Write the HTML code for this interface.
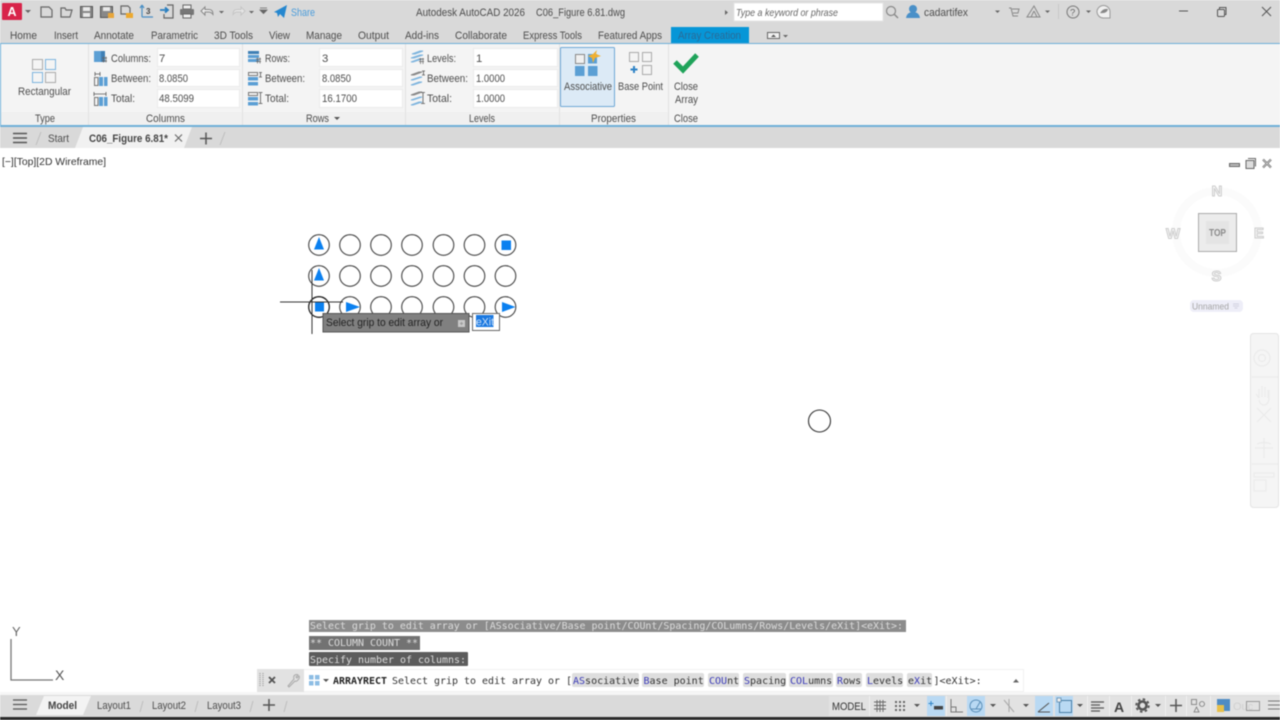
<!DOCTYPE html>
<html><head><meta charset="utf-8"><title>AutoCAD Array Creation</title>
<style>
html,body{margin:0;padding:0;width:1280px;height:720px;overflow:hidden;background:#fff}
svg{display:block;filter:blur(.4px)}
text{font-family:"Liberation Sans",sans-serif;font-size:11.3px;fill:#4d4d4d}
.m{font-family:"DejaVu Sans Mono","Liberation Mono",monospace;font-size:10px;fill:#333}
.u{fill:#3a3ab8}
.g{fill:#dcdcdc}
.i{fill:none;stroke:#666;stroke-width:1.2}
.b{fill:#5b9fd4}
.c{fill:none;stroke:#444;stroke-width:1.1}
.gr{fill:#0a80f0}
.v{fill:#f7f7f7;stroke:#cdcdcd;stroke-width:1;font-weight:bold;font-size:15px}
</style></head><body>
<svg width="1280" height="720" viewBox="0 0 1280 720" xmlns="http://www.w3.org/2000/svg">
<rect width="1280" height="720" fill="#fff"/>
<!-- top band -->
<rect width="1280" height="43" fill="#d9d9d9"/>
<!-- logo -->
<rect x="2" y="3" width="20" height="17" rx="1" fill="#d8244a"/>
<text x="7.500" y="16" style="font-weight:bold;font-size:12.500px;fill:#fff">A</text>
<path d="M25 10h6l-3 3z" fill="#666"/>
<!-- QAT icons -->
<path class="i" d="M41 7h8l3 3v7H41z"/>
<path class="i" d="M61 8h4l1 2h6l-2 7H61z"/>
<path d="M80.500 6.500h12v11h-12z" fill="#888" stroke="#555"/><rect x="83" y="7" width="7" height="4" fill="#e8e8e8"/><rect x="83" y="13" width="7" height="4" fill="#e8e8e8"/>
<path d="M100.500 6.500h12v11h-12z" fill="#888" stroke="#555"/><rect x="103" y="7" width="7" height="4" fill="#e8e8e8"/><rect x="108" y="13" width="6" height="5" fill="#e8a63a"/>
<path class="i" d="M121 6h7l2 2v6h-9z"/><rect x="126" y="13" width="7" height="5" fill="#eda92e"/>
<path d="M142 5v12M142 5l-2 3M142 5l2 3M142 17h11" fill="none" stroke="#4a8fc4" stroke-width="1.200"/><text x="146" y="14" style="font-size:8px;font-weight:bold;fill:#444">3</text>
<path class="i" d="M167 5h6v13h-9v-4"/><path d="M160 10h7M165 7.500l3 2.500-3 2.500" fill="none" stroke="#2a7fc0" stroke-width="1.800"/>
<path d="M183 5h8v4h-8z" fill="#eee" stroke="#666"/><rect x="180" y="9" width="14" height="6" rx="1" fill="#777"/><path d="M183 14h8v4h-8z" fill="#eee" stroke="#666"/>
<path d="M201 11l4-4v2.500h4q4 0 4 5-2-2.500-4-2.500h-4V15z" fill="#eee" stroke="#888"/>
<path d="M219 11h5l-2.500 2.500z" fill="#666"/>
<path d="M245 11l-4-4v2.500h-4q-4 0-4 5 2-2.500 4-2.500h4V15z" fill="#e6e6e6" stroke="#c5c5c5"/>
<path d="M249 11h5l-2.500 2.500z" fill="#666"/>
<path d="M260 8h7M260 10h7l-3.500 3.500z" fill="#666" stroke="#666" stroke-width=".8"/>
<path d="M274 12l13-7-3 13-4-4-2 3-1-4z" fill="#2587cf"/>
<text x="291" y="16" textLength="24" lengthAdjust="spacingAndGlyphs" style="fill:#4b9ddb">Share</text>
<!-- title -->
<text x="416" y="16" textLength="109" lengthAdjust="spacingAndGlyphs">Autodesk AutoCAD 2026</text>
<text x="536" y="16" textLength="89" lengthAdjust="spacingAndGlyphs">C06_Figure 6.81.dwg</text>
<path d="M725 10l3 2.500-3 2.500z" fill="#666"/>
<rect x="734" y="3" width="149" height="18" fill="#fff" stroke="#e5e5e5"/>
<text x="736" y="16" textLength="102" lengthAdjust="spacingAndGlyphs" style="font-style:italic;font-size:10.500px;fill:#666">Type a keyword or phrase</text>
<circle cx="891" cy="11" r="4.500" fill="none" stroke="#888" stroke-width="1.200"/><path d="M894.500 14.500l3.500 3.500" stroke="#888" stroke-width="1.400"/>
<circle cx="913" cy="9" r="4" fill="#4a90c8"/><path d="M906 18q1-6 7-6t7 6z" fill="#4a90c8"/>
<text x="924" y="16" textLength="44" lengthAdjust="spacingAndGlyphs">cadartifex</text>
<path d="M995 10.500h5l-2.500 2.500z" fill="#666"/>
<path d="M1009 8h2l2 8h5M1012 9h7l-1 4h-5" fill="none" stroke="#888" stroke-width="1"/>
<path d="M1034 6l6 11h-13z M1034 11l-3 6M1034 11l3 6" fill="none" stroke="#888" stroke-width="1"/>
<path d="M1045 10.500h5l-2.500 2.500z" fill="#666"/>
<rect x="1058" y="4" width="1" height="15" fill="#c8c8c8"/>
<circle cx="1073" cy="12" r="6" fill="none" stroke="#777" stroke-width="1"/><text x="1070" y="15.500" style="font-size:9.500px;fill:#666">?</text>
<path d="M1086 10.500h5l-2.500 2.500z" fill="#666"/>
<path d="M1097 12a6.500 6.500 0 1 1 13 0v6h-7a6.500 6.500 0 0 1-6-6z" fill="#f0f0f0" stroke="#999"/><path d="M1100 13q3-5 8-4-1 5-8 4z" fill="#888"/>
<path d="M1179 11h9" stroke="#555" stroke-width="1"/>
<rect x="1217.500" y="9.500" width="7" height="7" rx="1" fill="none" stroke="#555"/><path d="M1219.500 9v-1.500h6.500v7h-1.500" fill="none" stroke="#555"/>
<path d="M1262 7l9 9M1271 7l-9 9" stroke="#555" stroke-width="1"/>
<!-- tabs -->
<text x="10" y="39" textLength="27" lengthAdjust="spacingAndGlyphs">Home</text>
<text x="54" y="39" textLength="24" lengthAdjust="spacingAndGlyphs">Insert</text>
<text x="94" y="39" textLength="40" lengthAdjust="spacingAndGlyphs">Annotate</text>
<text x="151" y="39" textLength="47" lengthAdjust="spacingAndGlyphs">Parametric</text>
<text x="214" y="39" textLength="39" lengthAdjust="spacingAndGlyphs">3D Tools</text>
<text x="269" y="39" textLength="21" lengthAdjust="spacingAndGlyphs">View</text>
<text x="306" y="39" textLength="36" lengthAdjust="spacingAndGlyphs">Manage</text>
<text x="358" y="39" textLength="31" lengthAdjust="spacingAndGlyphs">Output</text>
<text x="405" y="39" textLength="34" lengthAdjust="spacingAndGlyphs">Add-ins</text>
<text x="455" y="39" textLength="52" lengthAdjust="spacingAndGlyphs">Collaborate</text>
<text x="523" y="39" textLength="59" lengthAdjust="spacingAndGlyphs">Express Tools</text>
<text x="598" y="39" textLength="64" lengthAdjust="spacingAndGlyphs">Featured Apps</text>
<rect x="671" y="27" width="78" height="17" fill="#0696d7"/>
<text x="678" y="39" textLength="63" lengthAdjust="spacingAndGlyphs" style="fill:#2b6a96">Array Creation</text>
<rect x="767.500" y="32.500" width="12" height="6" fill="#f0f0f0" stroke="#666"/><path d="M771 37l2.500-2.500 2.500 2.500z" fill="#555"/>
<path d="M783 35h5l-2.500 2.500z" fill="#666"/>
<!-- ribbon -->
<rect x="0" y="43" width="1280" height="84" fill="#6fb0d8"/>
<rect x="1" y="44" width="1279" height="81" fill="#f4f4f4"/>
<rect x="1" y="112" width="667" height="13" fill="#f0f0f0"/>
<g fill="#e2e2e2"><rect x="88" y="44" width="1" height="81"/><rect x="242" y="44" width="1" height="81"/><rect x="405" y="44" width="1" height="81"/><rect x="559" y="44" width="1" height="81"/><rect x="668" y="44" width="1" height="81"/></g>
<!-- rectangular icon -->
<g fill="none" stroke-width="1"><rect x="32.500" y="59.500" width="10" height="10" stroke="#aaa"/><rect x="45.500" y="59.500" width="10" height="10" stroke="#7db4de"/><rect x="32.500" y="72.500" width="10" height="10" stroke="#7db4de"/><rect x="45.500" y="72.500" width="10" height="10" stroke="#aaa"/></g>
<text x="18" y="95" textLength="53" lengthAdjust="spacingAndGlyphs">Rectangular</text>
<text x="35" y="122" textLength="20" lengthAdjust="spacingAndGlyphs">Type</text>
<!-- inputs -->
<g fill="#fff" stroke="#ebebeb">
<rect x="157.500" y="48.500" width="82" height="18"/><rect x="157.500" y="69.500" width="82" height="17"/><rect x="157.500" y="89.500" width="82" height="18"/>
<rect x="319.500" y="48.500" width="83" height="18"/><rect x="319.500" y="69.500" width="83" height="17"/><rect x="319.500" y="89.500" width="83" height="18"/>
<rect x="473.500" y="48.500" width="84" height="18"/><rect x="473.500" y="69.500" width="84" height="17"/><rect x="473.500" y="89.500" width="84" height="18"/>
</g>
<!-- column icons -->
<rect x="94" y="51" width="11" height="11" class="b"/><rect x="101" y="51" width="4" height="11" fill="#3f7fb5"/>
<path d="M102 58h5M102 61h5M103.500 56.500v6M106 56.500v6" stroke="#666" stroke-width=".7"/>
<path d="M95 74h5M95 72v4M100 72v4" stroke="#555" stroke-width=".8"/><rect x="94.500" y="77.500" width="3.500" height="8" fill="none" stroke="#777"/><rect x="99" y="77" width="4" height="9" class="b"/><rect x="104" y="77" width="3.500" height="9" class="b"/>
<path d="M94 94h12M94 92v4M106 92v4" stroke="#555" stroke-width=".8"/><rect x="94.500" y="97.500" width="3.500" height="8" fill="none" stroke="#777"/><rect x="99" y="97" width="4" height="9" class="b"/><rect x="104" y="97" width="3.500" height="9" class="b"/>
<text x="111" y="62" textLength="40" lengthAdjust="spacingAndGlyphs">Columns:</text>
<text x="111" y="82" textLength="40" lengthAdjust="spacingAndGlyphs">Between:</text>
<text x="111" y="102" textLength="24" lengthAdjust="spacingAndGlyphs">Total:</text>
<text x="159" y="62">7</text>
<text x="159" y="82" textLength="29" lengthAdjust="spacingAndGlyphs">8.0850</text>
<text x="159" y="102" textLength="35" lengthAdjust="spacingAndGlyphs">48.5099</text>
<text x="146" y="122" textLength="39" lengthAdjust="spacingAndGlyphs">Columns</text>
<!-- row icons -->
<rect x="248" y="51" width="11" height="3" fill="#3f7fb5"/><rect x="248" y="55" width="11" height="3" class="b"/><rect x="248" y="59" width="11" height="3" class="b"/>
<path d="M256 59h5M256 61.500h5M257.500 57.500v6M260 57.500v6" stroke="#666" stroke-width=".7"/>
<rect x="248.500" y="72.500" width="9" height="3" fill="none" stroke="#777"/><rect x="248" y="77" width="10" height="3.500" class="b"/><rect x="248" y="82" width="10" height="3.500" class="b"/><path d="M259 72.500h3M259 77h3M260.500 72.500v4.500" stroke="#555" stroke-width=".8"/>
<rect x="248.500" y="92.500" width="9" height="3" fill="none" stroke="#777"/><rect x="248" y="97" width="10" height="3.500" class="b"/><rect x="248" y="102" width="10" height="3.500" class="b"/><path d="M258.500 92.500h4M258.500 103.500h4M260.500 92.500v11" stroke="#555" stroke-width=".8"/>
<text x="265" y="62" textLength="25" lengthAdjust="spacingAndGlyphs">Rows:</text>
<text x="265" y="82" textLength="40" lengthAdjust="spacingAndGlyphs">Between:</text>
<text x="265" y="102" textLength="24" lengthAdjust="spacingAndGlyphs">Total:</text>
<text x="322" y="62">3</text>
<text x="322" y="82" textLength="29" lengthAdjust="spacingAndGlyphs">8.0850</text>
<text x="322" y="102" textLength="35" lengthAdjust="spacingAndGlyphs">16.1700</text>
<text x="306" y="122" textLength="23" lengthAdjust="spacingAndGlyphs">Rows</text>
<path d="M334 117h6l-3 3z" fill="#555"/>
<!-- level icons -->
<path d="M412 54l8-3h3l-8 3zM411 58l9-3h3l-9 3zM411 62l8-3h3l-9 3z" fill="#7db4de" stroke="#7db4de"/>
<path d="M419 59h5M419 61.500h5M420.500 58v6M423 58v6" stroke="#666" stroke-width=".7"/>
<path d="M411 75l8-3h3l-8 3z" fill="none" stroke="#888"/><path d="M411 80l9-3h2l-9 3zM411 85l8-3h3l-9 3z" fill="#7db4de" stroke="#7db4de"/><path d="M422 71h3M422 75h3M423.500 71v4" stroke="#555" stroke-width=".8"/>
<path d="M411 95l8-3h3l-8 3z" fill="none" stroke="#888"/><path d="M411 100l9-3h2l-9 3zM411 105l8-3h3l-9 3z" fill="#7db4de" stroke="#7db4de"/><path d="M421 92.500h4M421 103.500h4M423 92.500v11" stroke="#555" stroke-width=".8"/>
<text x="427" y="62" textLength="29" lengthAdjust="spacingAndGlyphs">Levels:</text>
<text x="427" y="82" textLength="41" lengthAdjust="spacingAndGlyphs">Between:</text>
<text x="427" y="102" textLength="25" lengthAdjust="spacingAndGlyphs">Total:</text>
<text x="476" y="62">1</text>
<text x="476" y="82" textLength="29" lengthAdjust="spacingAndGlyphs">1.0000</text>
<text x="476" y="102" textLength="29" lengthAdjust="spacingAndGlyphs">1.0000</text>
<text x="469" y="122" textLength="26" lengthAdjust="spacingAndGlyphs">Levels</text>
<!-- associative -->
<rect x="560.500" y="47.500" width="54" height="59" rx="1" fill="#dceaf6" stroke="#6fa8d6"/>
<rect x="575.500" y="54.500" width="9" height="9" fill="#f0f0f0" stroke="#888"/>
<rect x="588" y="54" width="9" height="9.500" class="b"/>
<rect x="575" y="66" width="9.500" height="10" class="b"/><rect x="588" y="66" width="9.500" height="10" class="b"/>
<path d="M597 50l-1 4 5 2-6 2-2 5-1-5-4-2 5-2z" fill="#f0b030"/>
<text x="564" y="90" textLength="48" lengthAdjust="spacingAndGlyphs">Associative</text>
<g fill="none" stroke="#aaa"><rect x="629.500" y="52.500" width="9" height="9"/><rect x="642.500" y="52.500" width="9" height="9"/><rect x="642.500" y="65.500" width="9" height="9"/></g>
<path d="M630.500 69.500h7M634 66v7" stroke="#2f83c6" stroke-width="2"/>
<text x="618" y="90" textLength="45" lengthAdjust="spacingAndGlyphs">Base Point</text>
<text x="591" y="122" textLength="45" lengthAdjust="spacingAndGlyphs">Properties</text>
<path d="M675 62l8 8 14-15" fill="none" stroke="#1fa35a" stroke-width="5"/>
<text x="674" y="90" textLength="24" lengthAdjust="spacingAndGlyphs">Close</text>
<text x="675" y="103" textLength="23" lengthAdjust="spacingAndGlyphs">Array</text>
<text x="674" y="122" textLength="24" lengthAdjust="spacingAndGlyphs">Close</text>
<!-- file tabs -->
<rect x="0" y="127" width="1280" height="21" fill="#d9d9d9"/>
<path d="M13 133.500h14M13 138h14M13 142.500h14" stroke="#555" stroke-width="1.400"/>
<path d="M36 145l5-13" stroke="#bdbdbd"/>
<text x="48" y="142" textLength="21" lengthAdjust="spacingAndGlyphs">Start</text>
<path d="M75 148l8-21h109l-8 21z" fill="#f1f1f1"/>
<text x="89" y="142" textLength="79" lengthAdjust="spacingAndGlyphs" style="font-weight:bold;fill:#444">C06_Figure 6.81*</text>
<path d="M175 134.500l7 7M182 134.500l-7 7" stroke="#666" stroke-width="1.100"/>
<path d="M200 138.500h12M206 132.500v12" stroke="#555" stroke-width="1.500"/>
<path d="M220 145l5-13" stroke="#bdbdbd"/>
<!-- viewport controls -->
<text x="2" y="165" textLength="104" lengthAdjust="spacingAndGlyphs" style="font-size:10.500px;fill:#333">[−][Top][2D Wireframe]</text>
<rect x="1229.500" y="163.500" width="10" height="3" fill="#bbb" stroke="#666"/>
<rect x="1246" y="160.500" width="8" height="8" fill="#ddd" stroke="#666"/><path d="M1248 158.500h7.500v8" fill="none" stroke="#666"/>
<path d="M1263 159.500l8 8M1271 159.500l-8 8" stroke="#666" stroke-width="2.200"/><path d="M1263 159.500l8 8M1271 159.500l-8 8" stroke="#ddd" stroke-width=".8"/>
<!-- circles -->
<g class="c">
<circle cx="319" cy="245" r="10.300"/><circle cx="350" cy="245" r="10.300"/><circle cx="381" cy="245" r="10.300"/><circle cx="412" cy="245" r="10.300"/><circle cx="443.500" cy="245" r="10.300"/><circle cx="474.500" cy="245" r="10.300"/><circle cx="505.500" cy="245" r="10.300"/>
<circle cx="319" cy="276" r="10.300"/><circle cx="350" cy="276" r="10.300"/><circle cx="381" cy="276" r="10.300"/><circle cx="412" cy="276" r="10.300"/><circle cx="443.500" cy="276" r="10.300"/><circle cx="474.500" cy="276" r="10.300"/><circle cx="505.500" cy="276" r="10.300"/>
<circle cx="350" cy="307" r="10.300"/><circle cx="381" cy="307" r="10.300"/><circle cx="412" cy="307" r="10.300"/><circle cx="443.500" cy="307" r="10.300"/><circle cx="474.500" cy="307" r="10.300"/><circle cx="505.500" cy="307" r="10.300"/>
</g>
<circle cx="319" cy="307" r="10.300" fill="none" stroke="#222" stroke-width="1.300"/>
<path class="gr" d="M319 237l5 12.500h-10z"/>
<path class="gr" d="M319 268l5 12.500h-10z"/>
<rect class="gr" x="501.500" y="240.500" width="9.500" height="9.500"/>
<rect class="gr" x="315" y="302.500" width="9" height="9"/>
<path class="gr" d="M346 302l14 5-14 5z"/>
<path class="gr" d="M502 302l13.500 5-13.500 5z"/>
<!-- crosshair -->
<path d="M312 270v64M280 302h63" stroke="#333" stroke-width="1"/>
<!-- tooltip -->
<rect x="323" y="313.500" width="146" height="18.500" fill="#808080" stroke="#555"/>
<text x="326" y="326" textLength="117" lengthAdjust="spacingAndGlyphs" style="fill:#222">Select grip to edit array or</text>
<rect x="458" y="320" width="7" height="7" fill="#c8c8c8"/><path d="M460 323.500h3M461.500 322v3" stroke="#999"/>
<rect x="472.500" y="313.500" width="27" height="17" fill="#fff" stroke="#666"/>
<rect x="476" y="315" width="17.500" height="12" fill="#1a78e0"/>
<text x="476" y="325.500" textLength="18" lengthAdjust="spacingAndGlyphs" style="fill:#cfe3fa">eXit</text>
<!-- cursor -->
<circle cx="819.500" cy="421" r="11" fill="none" stroke="#333" stroke-width="1.100"/>
<!-- viewcube -->
<circle cx="1217" cy="232" r="41" fill="none" stroke="#fbfbfb" stroke-width="8"/>
<rect x="1198.500" y="213.500" width="38" height="38" fill="#ececec" stroke="#aaa"/>
<rect x="1206" y="221" width="23" height="23" fill="#e4e4e4"/>
<text x="1209" y="236" textLength="17" lengthAdjust="spacingAndGlyphs" style="font-weight:bold;font-size:10px;fill:#8a8a8a">TOP</text>
<text class="v" x="1211.500" y="196">N</text>
<text class="v" x="1211.500" y="281">S</text>
<text class="v" x="1166" y="238.500">W</text>
<text class="v" x="1254" y="238">E</text>
<rect x="1190" y="300" width="53" height="12" rx="4" fill="#eeeef8"/>
<text x="1192" y="309.500" textLength="37" lengthAdjust="spacingAndGlyphs" style="font-size:9.500px;fill:#a5a5a5">Unnamed</text>
<path d="M1233 304h6M1233 306h6M1234.500 308h3" stroke="#c8c8d8" stroke-width=".8"/>
<!-- nav bar -->
<rect x="1250.500" y="333.500" width="28" height="174" rx="3" fill="#f5f5f5" stroke="#e4e4e4"/>
<g fill="none" stroke="#ebebeb" stroke-width="1.200">
<circle cx="1262" cy="358" r="8"/><circle cx="1262" cy="358" r="3.500"/>
<path d="M1252 377h26M1252 464h26"/>
<path d="M1259 398v-9M1262 397v-11M1265 397v-10M1268 398v-8M1259 398l-3-4M1259 400q1 5 5 5t5-6v-9"/>
<path d="M1257 408l14 14M1271 408l-14 14"/>
<path d="M1264 438v20M1255 448h18M1257 444q7-3 14 0"/>
<rect x="1254" y="473" width="20" height="4"/><rect x="1254" y="480" width="12" height="11"/>
</g>
<!-- command history -->
<rect x="309" y="620" width="597" height="12" fill="#8c8c8c"/>
<text class="m g" x="310" y="629" textLength="593" lengthAdjust="spacingAndGlyphs">Select grip to edit array or [ASsociative/Base point/COUnt/Spacing/COLumns/Rows/Levels/eXit]&lt;eXit&gt;:</text>
<rect x="309" y="636" width="111" height="14" fill="#727272"/>
<text class="m g" x="310" y="646" textLength="108" lengthAdjust="spacingAndGlyphs">** COLUMN COUNT **</text>
<rect x="309" y="652" width="159" height="14" rx="1" fill="#5c5c5c"/>
<text class="m g" x="310" y="663" textLength="156" lengthAdjust="spacingAndGlyphs">Specify number of columns:</text>
<!-- command line -->
<rect x="257" y="669" width="767" height="23" fill="#f1f1f1"/>
<rect x="257" y="669" width="47" height="23" fill="#e2e2e2"/>
<rect x="304" y="670" width="719" height="21" fill="#fff"/>
<path d="M260 673v14M263 673v14" stroke="#999" stroke-width="1.200" stroke-dasharray="1 1"/>
<path d="M269 677l6 6M275 677l-6 6" stroke="#555" stroke-width="1.800"/>
<path d="M288 686l6-7q-1-3 1-4t3 0l-2 2 1 1 2-2q1 2-1 4t-3 1l-6 6z" fill="none" stroke="#aaa"/>
<g fill="#8dbde4"><rect x="309" y="675" width="4.500" height="4.500"/><rect x="315" y="675" width="4.500" height="4.500"/><rect x="309" y="681" width="4.500" height="4.500"/><rect x="315" y="681" width="4.500" height="4.500"/></g>
<path d="M323 679h6l-3 3z" fill="#555"/>
<text class="m" x="333" y="684" style="font-weight:bold;fill:#222" textLength="54" lengthAdjust="spacingAndGlyphs">ARRAYRECT</text>
<text class="m" x="392" y="684" textLength="180" lengthAdjust="spacingAndGlyphs">Select grip to edit array or [</text>
<g fill="#dedede">
<rect x="572" y="673" width="67" height="14" rx="2"/><rect x="642" y="673" width="62" height="14" rx="2"/><rect x="708" y="673" width="31" height="14" rx="2"/><rect x="743" y="673" width="43" height="14" rx="2"/><rect x="789" y="673" width="44" height="14" rx="2"/><rect x="836" y="673" width="26" height="14" rx="2"/><rect x="866" y="673" width="37" height="14" rx="2"/><rect x="907" y="673" width="25" height="14" rx="2"/>
</g>
<text class="m" x="573" y="684"><tspan class="u">AS</tspan>sociative</text>
<text class="m" x="643.500" y="684"><tspan class="u">B</tspan>ase point</text>
<text class="m" x="709" y="684"><tspan class="u">COU</tspan>nt</text>
<text class="m" x="744" y="684"><tspan class="u">S</tspan>pacing</text>
<text class="m" x="790" y="684"><tspan class="u">COL</tspan>umns</text>
<text class="m" x="837" y="684"><tspan class="u">R</tspan>ows</text>
<text class="m" x="867" y="684"><tspan class="u">L</tspan>evels</text>
<text class="m" x="908" y="684">e<tspan class="u">X</tspan>it</text>
<text class="m" x="933.500" y="684">]&lt;eXit&gt;:</text>
<path d="M1013 682.500l3-3.500 3 3.500z" fill="#666"/>
<!-- UCS -->
<path d="M11 639v41h42" fill="none" stroke="#777" stroke-width="1.300"/>
<text x="12" y="636" style="font-size:13px;fill:#666">Y</text>
<text x="55" y="680" style="font-size:14px;fill:#555">X</text>
<!-- bottom bar -->
<rect x="0" y="692" width="1280" height="3" fill="#f6f6f6"/>
<rect x="0" y="695" width="1280" height="22" fill="#dadada"/>
<rect x="0" y="717" width="1280" height="3" fill="#2a2a2a"/>
<path d="M13 700h14M13 704.500h14M13 709h14" stroke="#555" stroke-width="1.300"/>
<path d="M36 715l8-19h47l-8 19z" fill="#f3f3f3"/>
<text x="48" y="709" textLength="29" lengthAdjust="spacingAndGlyphs" style="font-weight:bold;fill:#444">Model</text>
<text x="97" y="709" textLength="34" lengthAdjust="spacingAndGlyphs">Layout1</text>
<text x="152" y="709" textLength="34" lengthAdjust="spacingAndGlyphs">Layout2</text>
<text x="207" y="709" textLength="34" lengthAdjust="spacingAndGlyphs">Layout3</text>
<path d="M140 712l3-11M195 712l3-11M250 712l3-11M284 712l3-11" stroke="#bdbdbd"/>
<path d="M263 705h12M269 699v12" stroke="#555" stroke-width="1.500"/>
<!-- status bar -->
<rect x="829" y="696" width="451" height="20" fill="#e2e2e2"/>
<g fill="#efefef"><rect x="869" y="696" width="1" height="20"/><rect x="946" y="696" width="1" height="20"/><rect x="1087" y="696" width="1" height="20"/><rect x="1109" y="696" width="1" height="20"/><rect x="1131" y="696" width="1" height="20"/><rect x="1165" y="696" width="1" height="20"/><rect x="1186" y="696" width="1" height="20"/><rect x="1210" y="696" width="1" height="20"/></g>
<text x="832" y="710" textLength="34" lengthAdjust="spacingAndGlyphs" style="font-size:11px;fill:#333">MODEL</text>
<path d="M874 702h12M874 705.500h12M874 709h12M877 700v12M880 700v12M883 700v12" stroke="#666" stroke-width=".9"/>
<g fill="#666"><rect x="895" y="701" width="2" height="2"/><rect x="899" y="701" width="2" height="2"/><rect x="903" y="701" width="2" height="2"/><rect x="895" y="705" width="2" height="2"/><rect x="899" y="705" width="2" height="2"/><rect x="903" y="705" width="2" height="2"/><rect x="895" y="709" width="2" height="2"/><rect x="899" y="709" width="2" height="2"/><rect x="903" y="709" width="2" height="2"/></g>
<g fill="#555"><path d="M914 704h6l-3 3z"/><path d="M990 704h6l-3 3z"/><path d="M1023 704h6l-3 3z"/><path d="M1077 704h6l-3 3z"/><path d="M1155 704h6l-3 3z"/></g>
<g fill="#b9d9f3"><rect x="927" y="696" width="18" height="20"/><rect x="967" y="696" width="18" height="20"/><rect x="1035" y="696" width="18" height="20"/><rect x="1055" y="696" width="18" height="20"/></g>
<path d="M931 701v5M928.500 703.500h5" stroke="#2f83c6"/><rect x="934" y="706" width="9" height="3.500" fill="#444"/>
<path d="M951 699v13h12M951 707h5v5" fill="none" stroke="#777"/>
<circle cx="976" cy="706" r="6" fill="none" stroke="#5b8fb8"/><path d="M971 709h10M976 709l4-7" stroke="#5b8fb8"/>
<path d="M1004 700l10 12M1009 699v13" stroke="#a8a8a8"/>
<path d="M1038 712l11-9M1038 712h12" stroke="#555" stroke-width="1.100"/>
<rect x="1059.500" y="700.500" width="12" height="12" fill="none" stroke="#4a7ea6"/><rect x="1057" y="698" width="4" height="4" fill="#eee" stroke="#4a7ea6" stroke-width=".7"/>
<path d="M1091 702h13M1091 705h9M1091 708h13M1091 711h9" stroke="#555" stroke-width="1.200"/>
<text x="1114" y="712" style="font-weight:bold;font-size:14px;fill:#444">A</text>
<circle cx="1142.500" cy="705.500" r="4" fill="none" stroke="#555" stroke-width="2.600"/><circle cx="1142.500" cy="705.500" r="6.300" fill="none" stroke="#555" stroke-width="1.800" stroke-dasharray="2.500 2.450"/>
<path d="M1170 705.500h12M1176 699v13" stroke="#555" stroke-width="1.500"/>
<rect x="1191.500" y="699.500" width="5" height="5" fill="none" stroke="#777" stroke-width=".8"/><circle cx="1202" cy="704" r="2.500" fill="none" stroke="#777" stroke-width=".8"/><path d="M1194 712l2.500-5 2.500 5z" fill="none" stroke="#777" stroke-width=".8"/>
<rect x="1217" y="699" width="13" height="12" fill="#4f8cc4"/><rect x="1217" y="705" width="7" height="7" fill="#e8c04a"/>
<text x="1233" y="710" style="font-size:11px;fill:#d0d0d0">Ouc</text>
<rect x="1246.500" y="701.500" width="13" height="9" fill="none" stroke="#999"/>
<path d="M1268 701h17M1268 705h17M1268 709h17" stroke="#777" stroke-width="1.100"/>
</svg>
</body></html>
